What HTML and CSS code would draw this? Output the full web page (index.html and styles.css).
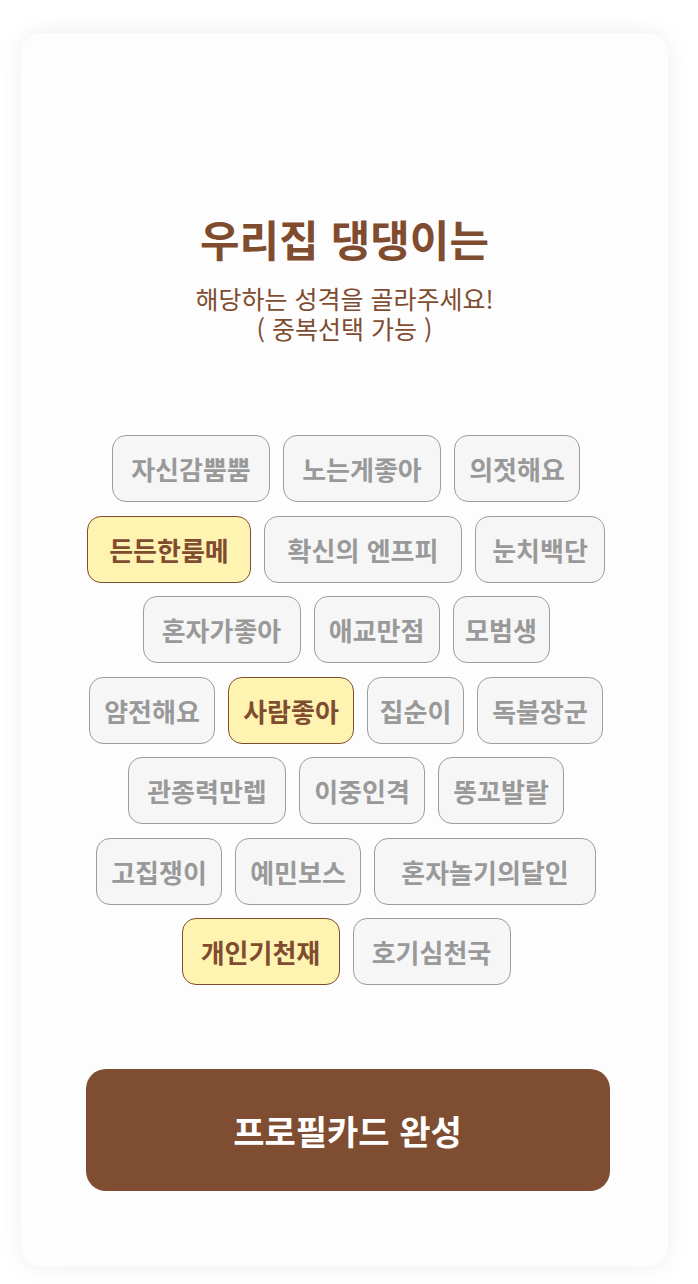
FILE: index.html
```html
<!DOCTYPE html>
<html lang="ko">
<head>
    <meta charset="UTF-8">
    <meta name="viewport" content="width=device-width, initial-scale=1">
    <title>우리집 댕댕이는</title>
    <link rel="stylesheet" href="styles.css">
</head>
<body>
<div class="card">

    <div class="intro">
        <h1 class="title">우리집 댕댕이는</h1>
        <p class="desc">해당하는 성격을 골라주세요!</p>
        <p class="desc">( 중복선택 가능 )</p>
    </div>

    <div class="tags">
        <div class="tag-row">
            <button type="button" class="tag len5">자신감뿜뿜</button>
            <button type="button" class="tag len5">노는게좋아</button>
            <button type="button" class="tag len4">의젓해요</button>
        </div>
        <div class="tag-row">
            <button type="button" class="tag len5 wide active">든든한룸메</button>
            <button type="button" class="tag len6">확신의 엔프피</button>
            <button type="button" class="tag len4 wide">눈치백단</button>
        </div>
        <div class="tag-row">
            <button type="button" class="tag len5">혼자가좋아</button>
            <button type="button" class="tag len4">애교만점</button>
            <button type="button" class="tag len3">모범생</button>
        </div>
        <div class="tag-row">
            <button type="button" class="tag len4">얌전해요</button>
            <button type="button" class="tag len4 active">사람좋아</button>
            <button type="button" class="tag len3">집순이</button>
            <button type="button" class="tag len4">독불장군</button>
        </div>
        <div class="tag-row">
            <button type="button" class="tag len5">관종력만렙</button>
            <button type="button" class="tag len4">이중인격</button>
            <button type="button" class="tag len4">똥꼬발랄</button>
        </div>
        <div class="tag-row">
            <button type="button" class="tag len4">고집쟁이</button>
            <button type="button" class="tag len4">예민보스</button>
            <button type="button" class="tag len7">혼자놀기의달인</button>
        </div>
        <div class="tag-row">
            <button type="button" class="tag len5 active">개인기천재</button>
            <button type="button" class="tag len5">호기심천국</button>
        </div>
    </div>

    <div class="bottom">
        <button type="button" class="done-btn">프로필카드 완성</button>
    </div>

</div>
</body>
</html>
```

FILE: styles.css
```css
* {
    box-sizing: border-box;
}

html, body {
    width: 100%;
    height: 100%;
}

body {
    margin: 0;
    padding: 33px 30px 18px 21px;
    background: #fff;
    font-family: "Noto Sans CJK KR", "Noto Sans", sans-serif;
    color: #7f4c30;
}

.card {
    display: flex;
    flex-direction: column;
    align-items: center;
    height: 100%;
    padding-top: 180px;
    background: #fdfdfd;
    border-radius: 20px;
    box-shadow: 0 0 24px rgba(0, 0, 0, 0.07);
}

.intro {
    display: flex;
    flex-direction: column;
    align-items: center;
}

.title {
    margin: 0 0 20px;
    font-size: 43px;
    line-height: 50px;
    font-weight: 700;
}

.desc {
    margin: 0;
    height: 30px;
    font-size: 25px;
    line-height: 30px;
    font-weight: 400;
}

.tags {
    display: flex;
    flex-direction: column;
    gap: 13.5px;
    margin-top: 92px;
    padding-left: 3px;
}

.tag-row {
    display: flex;
    justify-content: center;
    gap: 13px;
}

.tag {
    height: 67px;
    padding: 0;
    font-family: inherit;
    font-size: 26px;
    font-weight: 700;
    color: #999;
    background: #f6f6f6;
    border: 1.5px solid #9c9c9c;
    border-radius: 14px;
    cursor: pointer;
}

.tag.len3 { width: 97px; }
.tag.len4 { width: 126px; }
.tag.len5 { width: 158px; }
.tag.len6 { width: 198px; }
.tag.len7 { width: 222px; }
.tag.len4.wide { width: 130px; }
.tag.len5.wide { width: 164px; }

.tag.active {
    color: #7f4c30;
    background: #fff3b2;
    border-color: #7f4c30;
}

.bottom {
    margin-top: 84px;
    padding-left: 6px;
}

.done-btn {
    width: 524px;
    height: 122px;
    font-family: inherit;
    font-size: 34px;
    font-weight: 700;
    color: #fff;
    background: #7f4d31;
    border: none;
    border-radius: 20px;
    cursor: pointer;
}
```
